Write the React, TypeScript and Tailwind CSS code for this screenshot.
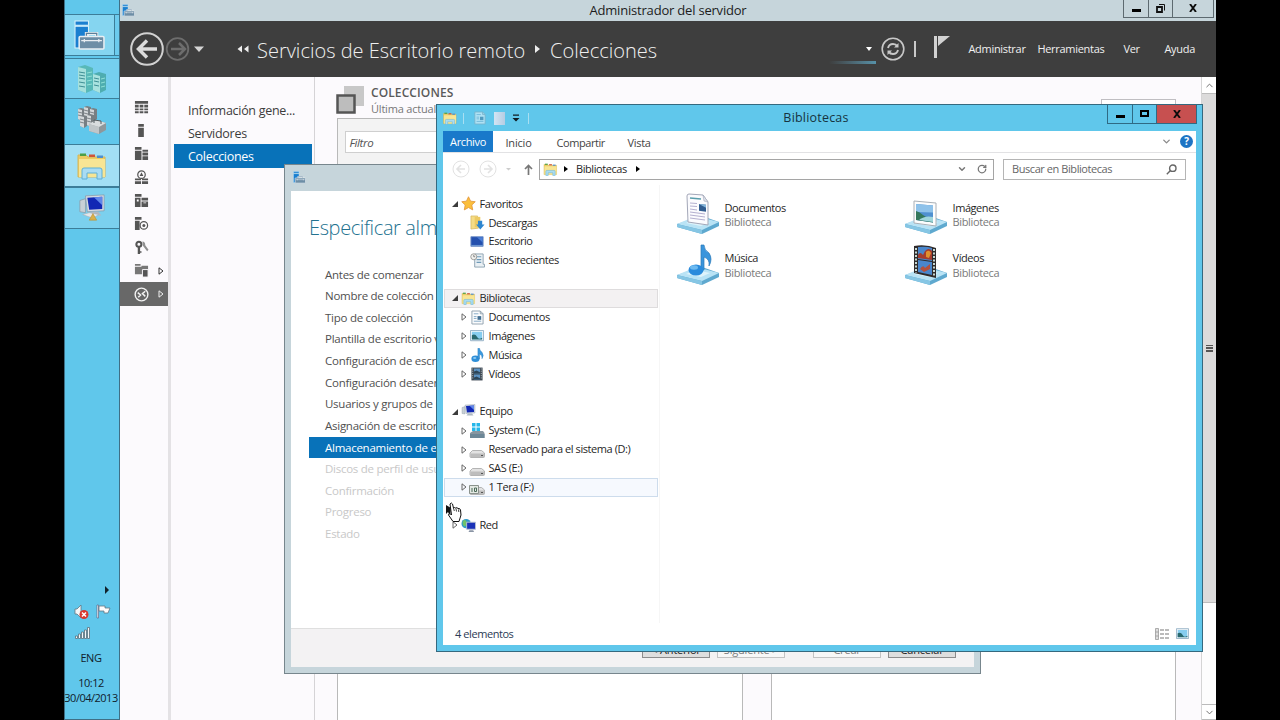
import type { ReactNode } from 'react';
import clsx from 'clsx';
import { ChevronDown, ChevronUp, RotateCw } from 'lucide-react';

/* ---------- Icons ---------- */

function ServerIcon({ className }: { className?: string }) {
  return (
    <svg viewBox="0 0 30 30" className={className}>
      <path d="M1 1h13v4H1z" fill="#1a7fd0" stroke="#d9f1fb" />
      <path d="M1 6h13v21H1z" fill="#1a7fd0" stroke="#d9f1fb" />
      <path d="M12 17v-4h10v4" fill="none" stroke="#e9eef2" strokeWidth="3" />
      <path d="M12 17v-4h10v4" fill="none" stroke="#5d7f98" strokeWidth="1.2" />
      <rect x="5" y="16" width="24" height="12" rx="1" fill="#6d8ea6" stroke="#e9eef2" strokeWidth="1.5" />
      <path d="M7 20h20M10 18.500v3M24 18.500v3" stroke="#e9eef2" strokeWidth="1.2" />
    </svg>
  );
}

function FolderIcon({ className }: { className?: string }) {
  return (
    <svg viewBox="0 0 30 28" className={className}>
      <path d="M1 3h8l2 2h17v20H1z" fill="#eccb62" stroke="#d3b65c" />
      <path d="M3 1.500h6v2.500H3z" fill="#4c9f45" />
      <path d="M12 2.500h6v2.500h-6z" fill="#d0553a" />
      <path d="M20 3.500h6v2.500h-6z" fill="#4d8fd0" />
      <path d="M2 7h26v18H2z" fill="#f8e594" />
      <path d="M5 27v-9q0-2 2-2h16q2 0 2 2v9h-5v-6H10v6z" fill="#a9dcf3" stroke="#5fb0d6" />
    </svg>
  );
}

function TowersIcon() {
  return (
    <svg viewBox="0 0 30 30" className="h-[30px] w-[30px]">
      <path d="M1 3l7-2 8 3v22l-7 3-8-3z" fill="#58b9b8" />
      <path d="M1 3l8 2v24l-8-3z" fill="#a5e0dc" />
      <path d="M16 10l6-2 7 2v16l-6 3-7-3z" fill="#4eadb0" />
      <path d="M16 10l7 2v17l-7-3z" fill="#a9e2df" />
      <path d="M2 8l6 1M2 11l6 1M2 14l6 1M2 18l6 1M2 22l6 1M17 14l5 1M17 17l5 1M17 21l5 1" stroke="#3f8f95" />
      <path d="M10 9l5-1M10 13l5-1M10 17l5-1M10 21l5-1M24 15l4-1M24 19l4-1M24 23l4-1" stroke="#8fe0d6" />
    </svg>
  );
}

function ClusterIcon() {
  const towers = [
    [1, 3], [7, 1], [13, 3], [3, 10], [10, 9],
  ];
  return (
    <svg viewBox="0 0 30 30" className="h-[30px] w-[30px]">
      {towers.map(([x, y]) => (
        <g key={`${x}-${y}`} transform={`translate(${x} ${y})`}>
          <path d="M0 1l3-1 4 1v10l-3 2-4-2z" fill="#787f83" />
          <path d="M0 1l4 1v11l-4-2z" fill="#d3d7d9" />
          <path d="M0 4l4 1M0 7l4 1" stroke="#686f73" strokeWidth=".8" />
        </g>
      ))}
      <path d="M12 19l7-4 10 3v7l-7 4-10-3z" fill="#8f979b" />
      <path d="M12 19l10 3v7l-10-3z" fill="#c0c6c9" />
      <path d="M12 19l7-4 10 3-7 4z" fill="#d9dddf" />
      <path d="M17 18v-3l7 1v3" fill="none" stroke="#555d61" />
    </svg>
  );
}

function MonitorIcon({ className, cone = false }: { className?: string; cone?: boolean }) {
  return (
    <svg viewBox="0 0 30 30" className={className}>
      <path d="M2 7l6-2v15l-6-1z" fill="#c8d0d6" stroke="#8693a0" strokeWidth=".7" />
      <path d="M8 2l20-1v17L10 19z" fill="#d5dbe2" stroke="#8390a0" strokeWidth=".7" />
      <path d="M10 4l16-1v13l-14 1z" fill="#1228b4" />
      <path d="M17 3.500l9-.5v9z" fill="#5f86ea" />
      <path d="M14 19h8l3 4H11z" fill="#aeb8c2" />
      {cone && (
        <>
          <path d="M5 22l7-2 10 2-6 4z" fill="#e3e7ea" stroke="#a4afb7" strokeWidth=".6" />
          <path d="M16 21l4 7h-8z" fill="#d8b04a" stroke="#b98a2a" strokeWidth=".6" />
        </>
      )}
    </svg>
  );
}

function Documento({ className }: { className?: string }) {
  return (
    <svg viewBox="0 0 14 16" className={className}>
      <path d="M1 1h9l3 3v11H1z" fill="#fbfcfd" stroke="#8fa0ad" />
      <path d="M10 1v3h3" fill="none" stroke="#8fa0ad" />
      <path d="M3 4h5M3 7h3M3 9h3M3 12h8" stroke="#7fa6c4" />
      <path d="M7 6.500h4v4H7z" fill="#416f93" />
    </svg>
  );
}

function Imagen({ className }: { className?: string }) {
  return (
    <svg viewBox="0 0 16 14" className={className}>
      <path d="M.5.500h15v12H.500z" fill="#fdfdfd" stroke="#84a5bd" />
      <path d="M2 2h12v9H2z" fill="#86cdef" />
      <path d="M2 6q4-2 6 2t6 1v2H2z" fill="#28696f" />
    </svg>
  );
}

function Musica({ className }: { className?: string }) {
  return (
    <svg viewBox="0 0 16 18" className={className}>
      <ellipse cx="5.500" cy="13" rx="5" ry="4" fill="#2f8fd8" />
      <path d="M8.500 0h2q0 3 3 5 3 4 0 8 1-4-3-6v6h-2z" fill="#3c9be0" stroke="#2576b8" strokeWidth=".5" />
      <ellipse cx="4.500" cy="12" rx="2" ry="1.300" fill="#8dcaf2" />
    </svg>
  );
}

function Video({ className }: { className?: string }) {
  return (
    <svg viewBox="0 0 14 16" className={className}>
      <path d="M.5.500h13v15H.500z" fill="#3d4852" />
      <path d="M3.500 1.500h7v6h-7zM3.500 8.500h7v6h-7z" fill="#5c93c4" />
      <path d="M3.500 5l3-1 4 2v1.500h-7zM3.500 12l3-1 4 2v1.500h-7z" fill="#2d4658" />
      <path d="M2 1.500v13M12 1.500v13" stroke="#b9c3ca" strokeDasharray="1.300 1.300" />
    </svg>
  );
}

function Disco({ variant = 'plain' }: { variant?: 'plain' | 'windows' | 'shared' }) {
  return (
    <svg viewBox="0 0 16 16" className="h-4 w-4">
      {variant === 'windows' ? (
        <>
          <path d="M1 10l3-2h10l1.500 2v5H1z" fill="#8796a0" />
          <path d="M1 11h14.500v4H1z" fill="#6c8797" />
          <path d="M3 0h3.500v3.500H3zM7.500 0H11v3.500H7.500zM3 4.500h3.500V8H3zM7.500 4.500H11V8H7.500z" fill="#25b7ea" />
        </>
      ) : (
        <>
          <path d="M1 11l2.500-2.500h9l3 2.500v3.500q0 1-1 1H2q-1 0-1-1z" fill="#e2e2e2" stroke="#a5a5a5" strokeWidth=".8" />
          <path d="M1.500 11.500h13.500v3.500H1.500z" fill="#bdbdbd" />
          <path d="M12 13.500h2" stroke="#555" />
        </>
      )}
      {variant === 'shared' && (
        <>
          <path d="M.5 6.500h9v8h-9z" fill="#e3e8e3" stroke="#8b938d" />
          <path d="M3 9v4M5.500 9h2v3.500h-2z" stroke="#4b6a58" fill="none" />
        </>
      )}
    </svg>
  );
}

/* glass stand that every large library icon sits on */
function LibraryStand({ children }: { children: ReactNode }) {
  return (
    <svg viewBox="0 0 44 42" className="h-[42px] w-11">
      <path d="M1 31l25-8 17 6v4l-17 8L1 34z" fill="#5fa9cf" />
      <path d="M1 31l19-8 23 6-17 8z" fill="#b9e3f5" />
      <path d="M1 31l25 6v4L1 34z" fill="#86c6e4" />
      <path d="M10 30l10-4 14 3-9 4z" fill="#def3fb" />
      {children}
    </svg>
  );
}

const bigIcons: Record<string, ReactNode> = {
  Documentos: (
    <LibraryStand>
      <path d="M11 3q0-2 2-2l14 1 5 7v23L12 29z" fill="#fbfbfe" stroke="#a3a7b8" />
      <path d="M27 2l1 6 4 1z" fill="#dfe3ec" stroke="#a3a7b8" strokeWidth=".6" />
      <path d="M14 5l11 1" stroke="#5a9eac" strokeWidth="1.600" />
      <path d="M14 10l7 .5M14 13l7 .5M14 16l7 1M14 19l15 2M14 22l15 2M14 25l15 2" stroke="#b4b0d0" />
      <path d="M23 11l7 .7v7l-7-.9z" fill="#315d90" />
      <path d="M23 11l7 .7v3z" fill="#85b7dc" />
    </LibraryStand>
  ),
  Imágenes: (
    <LibraryStand>
      <path d="M10 8l22 2v23l-22-3z" fill="#fdfdfd" stroke="#aab0b6" />
      <path d="M12 11l17 1.500v17L12 27z" fill="#4f90d0" />
      <path d="M12 11l17 1.500v7L12 19z" fill="#8ec2ea" />
      <path d="M12 18q4 1 7 4t10 2v5.500L12 27z" fill="#35785c" />
      <path d="M15 27q6-5 14-3v5z" fill="#9fd6dc" />
    </LibraryStand>
  ),
  Música: (
    <LibraryStand>
      <path d="M25 1h3q0 5 5 8 4 6 0 13 1-7-5-9v13h-3z" fill="#3a95dc" stroke="#2a78b8" strokeWidth=".7" />
      <ellipse cx="20" cy="26" rx="7.500" ry="5.500" fill="#2a8bdc" />
      <ellipse cx="18" cy="23.500" rx="4" ry="2.200" fill="#6dbaf0" />
    </LibraryStand>
  ),
  Vídeos: (
    <LibraryStand>
      <path d="M10 2q12-2 22 2v30l-22-5z" fill="#2f2b2b" />
      <path d="M14 3q8-1 14 1v13l-14-2zM14 16l14 2v13l-14-3z" fill="#4a86cc" />
      <path d="M14 11q2-4 5 0l2-4q4-4 7 0v9l-14-2z" fill="#a63c2e" />
      <path d="M22 8q3-3 5 1l-2 5-3-1z" fill="#e0902e" />
      <path d="M16 25q3-5 5-1l5-4v5l-6 3z" fill="#b5503c" />
      <path d="M12 4v25M30 5v27" stroke="#d9ece6" strokeWidth="1.800" strokeDasharray="2 1.500" />
    </LibraryStand>
  ),
};

function Estrella() {
  return (
    <svg viewBox="0 0 16 16" className="h-[15px] w-[15px]">
      <path d="M8 .8l2.200 4.700 5 .6-3.700 3.500 1 5.200L8 12.300l-4.500 2.500 1-5.200L.8 6.100l5-.6z" fill="#fbbf3c" stroke="#e2973a" strokeWidth=".9" />
    </svg>
  );
}

function Descargas() {
  return (
    <svg viewBox="0 0 16 16" className="h-[15px] w-[15px]">
      <path d="M1 1h7l1 13-8 1z" fill="#f5dc86" stroke="#d3b35a" strokeWidth=".7" />
      <path d="M5 2h6v11H5z" fill="#edca63" />
      <path d="M8.500 6h4.500v4h2.500L11 15.500 6.500 10h2z" fill="#2e86d0" />
    </svg>
  );
}

function Escritorio() {
  return (
    <svg viewBox="0 0 16 14" className="h-[13px] w-[14px]">
      <path d="M1 1.500h14v11H1z" fill="#2450ae" stroke="#7392c8" />
      <path d="M8 2h6.500v6z" fill="#4d80d6" />
      <path d="M1.500 11.500h13" stroke="#7aa3d8" />
    </svg>
  );
}

function Recientes() {
  return (
    <svg viewBox="0 0 16 16" className="h-[15px] w-[15px]">
      <path d="M5 1h9v11h1.500v3H5z" fill="#eaf0f4" stroke="#8da2b1" />
      <path d="M7 4h5M7 7h5M7 10h5" stroke="#6f9ab8" strokeWidth="1.200" />
      <circle cx="4" cy="4" r="3.200" fill="#f1f1ee" stroke="#9a9a96" />
      <path d="M4 2v2h1.500" fill="none" stroke="#666" strokeWidth=".8" />
    </svg>
  );
}

function Red() {
  return (
    <svg viewBox="0 0 16 16" className="h-[15px] w-[15px]">
      <circle cx="5.500" cy="6" r="5" fill="#2f9bc9" />
      <path d="M2 3q3-2 4 1T4 9Q1 8 2 3z" fill="#6fc36a" />
      <path d="M6 4.500h9.500v7.500H6z" fill="#1a32b8" stroke="#b8c1d4" />
      <path d="M9 13h4l1 2H8z" fill="#8a95a5" />
    </svg>
  );
}

/* ---------- Taskbar ---------- */

function Taskbar() {
  return (
    <aside className="flex w-14 shrink-0 flex-col border border-t-0 border-[#3f6f85] bg-[#60c7eb] text-[#10212c]">
      <div className="h-[14px]" />
      <div className="flex h-[42px] items-center border-y border-[#3c7d98] bg-[#6ccbed]">
        <div className="flex h-full w-[50px] items-center justify-center border-r border-[#3c7d98] bg-[#85d5f0]">
          <ServerIcon className="h-[31px] w-[31px]" />
        </div>
      </div>
      <div className="mt-0.5 flex h-[41px] items-center justify-center border-y border-[#3c7d98] bg-[#75cfee]">
        <TowersIcon />
      </div>
      <div className="flex h-[46px] items-center justify-center border-b border-[#3c7d98] pb-[3px]">
        <ClusterIcon />
      </div>
      <div className="flex h-[42px] items-center justify-center border-b border-[#3c7d98] bg-[#a2dff4]">
        <FolderIcon className="h-[28px] w-[30px]" />
      </div>
      <div className="flex h-[42px] items-center justify-center border-y border-[#3c7d98] bg-[#7bd0ee]">
        <MonitorIcon className="h-[30px] w-[28px]" cone />
      </div>

      {/* Tray */}
      <div className="mt-auto flex flex-col items-center pr-[2px] pb-[13px]">
        <div className="mb-[10px] ml-[32px] h-0 w-0 border-y-4 border-l-4 border-y-transparent border-l-[#11222c]" />
        <div className="flex w-full gap-[7px] pl-[9px]">
          <svg viewBox="0 0 15 16" className="h-4 w-[15px]">
            <path d="M1 5h2l4-4v13l-4-4H1z" fill="#f5f8fa" stroke="#667680" strokeWidth=".8" />
            <circle cx="10" cy="10.500" r="4.500" fill="#d8382f" />
            <path d="M8 8.500l4 4M12 8.500l-4 4" stroke="#fff" strokeWidth="1.500" />
          </svg>
          <svg viewBox="0 0 15 16" className="h-4 w-[15px]">
            <path d="M1 1h1.500v13H1z" fill="#f5f8fa" stroke="#557" strokeWidth=".6" />
            <path d="M3 2h6v2h5l-2 5H8V7H3z" fill="#fdfdfd" stroke="#667680" strokeWidth=".8" />
          </svg>
        </div>
        <svg viewBox="0 0 15 12" className="mt-[7px] mr-[18px] h-3 w-[15px]">
          <path d="M.5 9h2v2.500h-2zM3.500 7h2v4.500h-2zM6.500 5h2v6.500h-2zM9.500 3h2v8.500h-2zM12.500.5h2v11h-2z" fill="#f3f8fa" stroke="#5d6f79" strokeWidth=".8" />
        </svg>
        <span className="mt-[11px] text-[11px] leading-[15px] tracking-[-0.4px]">ENG</span>
        <span className="mt-[10px] text-[11px] leading-[15px] tracking-[-0.5px]">10:12</span>
        <span className="text-[11px] leading-[16px] tracking-[-0.500px]">30/04/2013</span>
      </div>
    </aside>
  );
}

/* ---------- Server manager ---------- */

const railIcons: ReactNode[] = [
  <path key="0" d="M1 1h14v3H1zM1 5h4v3H1zM6 5h4v3H6zM11 5h4v3h-4zM1 9h4v2H1zM6 9h4v2H6zM11 9h4v2h-4zM1 12h4v2H1zM6 12h4v2H6zM11 12h4v2h-4z" />,
  <path key="1" d="M4.500 1h6v3h-6zM4.500 5h6v10h-6z" />,
  <path key="2" d="M1 1h7v3H1zM1 5h7v10H1zM9 4h6v2H9zM9 7h6v3H9zM9 11h6v4H9z" />,
  <g key="3">
    <circle cx="8" cy="5" r="4" fill="none" stroke="#555" strokeWidth="1.300" />
    <path d="M8 2.500l2 4H6zM1 9h6.500v2H1zM8.500 9H15v2H8.500zM1 12h6.500v3H1zM8.500 12H15v3H8.500z" />
  </g>,
  <path key="4" d="M1 1h7v3H1zM1 5h6v10H1zM8 5h7v3H8zM8 9h7v6H8zM3 7h2v2H3zM10 10h3v1h-3z" fillRule="evenodd" />,
  <g key="5">
    <path d="M1 1h7v3H1zM1 5h5v10H1z" />
    <circle cx="10.500" cy="10" r="4" fill="#fcfafd" stroke="#555" strokeWidth="1.300" />
    <circle cx="10.500" cy="10" r="1.600" />
  </g>,
  <g key="6">
    <path d="M4 7.500h2.500V15H4zM6 12h2v1.500H6z" />
    <circle cx="5.200" cy="4.500" r="2.700" fill="none" stroke="#555" strokeWidth="2.200" />
    <path d="M9 1.500q3 0 3 4l3.500 5-1.500 1.500-4.500-6z" fill="#909090" />
  </g>,
  <g key="7">
    <path d="M1 1h6v2H1zM1 4h14v8H1zM8 3h7v1H8z" fill="#777" />
    <path d="M9 7h6v8H9z" stroke="#fcfafd" />
  </g>,
];

function SideRail() {
  return (
    <div className="flex w-12 shrink-0 flex-col pt-[18.500px]">
      {railIcons.map((icon, i) => (
        <div key={i} className="flex h-[23.350px] items-center pl-[14px]">
          <svg viewBox="0 0 16 16" className="h-[15px] w-[15px]" fill="#555">{icon}</svg>
          {i === 7 && <OutlineTriangle className="ml-[9px] text-[#333]" />}
        </div>
      ))}
      <div className="flex h-[24px] items-center bg-[#686868] pl-[14px]">
        <svg viewBox="0 0 16 16" className="h-[15px] w-[15px]" fill="none" stroke="#f2f2f2">
          <circle cx="8" cy="8" r="6.800" strokeWidth="1.500" />
          <path d="M4 6l3 2.500L4.500 11M12 4.500L9 7l3 3" strokeWidth="1.600" />
        </svg>
        <OutlineTriangle className="ml-[9px] text-[#eee]" />
      </div>
    </div>
  );
}

function OutlineTriangle({ className }: { className?: string }) {
  return (
    <svg viewBox="0 0 6 8" className={clsx('h-2 w-1.5 shrink-0', className)}>
      <path d="M1 .8L5 4 1 7.200z" fill="none" stroke="currentColor" />
    </svg>
  );
}

function ServerManager() {
  return (
    <div className="flex min-w-0 flex-1 flex-col bg-[#fcfafd]">
      <div className="flex h-[21px] shrink-0 bg-[#c6d5db]">
        <ServerIcon className="mt-[4px] ml-[2px] h-[13px] w-[13px]" />
        <div className="flex-1 pl-[78px] text-center text-[13px] leading-[21px] tracking-[-0.2px] text-[#1c1c1c]">
          Administrador del servidor
        </div>
        <div className="mr-[2px] flex h-[18px] border border-t-0 border-[#5d6a70]">
          <span className="flex w-[25px] justify-center border-r border-[#5d6a70] pt-[9px]">
            <span className="h-[3px] w-[9px] bg-black" />
          </span>
          <span className="flex w-6 justify-center border-r border-[#5d6a70] pt-1">
            <svg viewBox="0 0 9 9" className="h-[9px] w-[9px]" fill="none" stroke="#111">
              <path d="M1 3h5v5H1z" strokeWidth="1.800" />
              <path d="M3 .5h5.500v6" />
            </svg>
          </span>
          <span className="flex w-10 justify-center pt-1"><CloseX /></span>
        </div>
      </div>

      {/* Header */}
      <div className="flex h-[56px] shrink-0 items-center bg-[#3e3e3e] text-[#f0f0f0]">
        <svg viewBox="0 0 80 36" className="ml-[9px] h-9 w-20" fill="none">
          <circle cx="18" cy="18" r="15.800" stroke="#d2d2d2" strokeWidth="2" />
          <path d="M28 18H10M18 9.500L9.500 18l8.500 8.500" stroke="#dcdcdc" strokeWidth="3.500" />
          <circle cx="48.500" cy="18" r="10.800" stroke="#6d6d6d" strokeWidth="1.800" />
          <path d="M42 18h13M50 12l6 6-6 6" stroke="#6d6d6d" strokeWidth="2.500" />
          <path d="M65 15.500h10l-5 5.500z" fill="#d5d5d5" />
        </svg>
        <svg viewBox="0 0 12 8" className="mb-px ml-[28px] h-2 w-3" fill="#eee">
          <path d="M5 .5v7L.5 4zM11.500.5v7L7 4z" />
        </svg>
        <span className="mt-1 ml-[8px] w-[268px] text-[20px] font-light whitespace-nowrap">
          Servicios de Escritorio remoto
        </span>
        <span className="ml-[10px] h-0 w-0 border-y-4 border-l-5 border-y-transparent border-l-[#eee]" />
        <span className="mt-1 ml-[10px] text-[20px] font-light">Colecciones</span>

        <div className="ml-auto flex items-center pr-[21px] text-[11px] tracking-[-0.3px]">
          <div className="mt-[13px] flex h-[17px] w-[47px] flex-col items-end justify-between">
            <span className="mr-[4px] h-0 w-0 border-x-3 border-t-4 border-x-transparent border-t-white" />
            <span className="h-[3px] w-full bg-linear-to-r from-[#3e3e3e] to-[#5691a8]" />
          </div>
          <svg viewBox="0 0 24 24" className="ml-[5px] h-6 w-6" fill="none" stroke="#c8c8c8">
            <circle cx="12" cy="12" r="10.800" strokeWidth="1.600" />
            <path d="M7 11q1-4 5-4 3 0 4 2M17 13q-1 4-5 4-3 0-4-2" strokeWidth="1.900" />
            <path d="M17.500 6v4.500H13zM6.500 18v-4.500H11z" fill="#c8c8c8" stroke="none" />
          </svg>
          <span className="ml-[9px] h-4 w-[2px] bg-[#c9c9c9]" />
          <svg viewBox="0 0 16 22" className="mb-1 ml-[18px] h-[22px] w-4">
            <path d="M0 0h3v22H0zM4 0h12L4 10z" fill="#d2d2d2" />
          </svg>
          <span className="ml-[18px] w-[69px]">Administrar</span>
          <span className="w-[86px]">Herramientas</span>
          <span className="w-[41px]">Ver</span>
          <span>Ayuda</span>
        </div>
      </div>

      <div className="flex min-h-0 flex-1">
        <SideRail />
        <nav className="flex w-[147px] shrink-0 flex-col border-x-[3px] border-r border-l-[#e4e2e5] border-r-[#d5d3d6] pt-[21px] text-[12.500px] tracking-[-0.28px] text-[#3c3c3c]">
          <span className="h-[23px] pl-[17px] leading-[25px]">Información gene...</span>
          <span className="h-[23px] pl-[17px] leading-[25px]">Servidores</span>
          <span className="ml-[3px] h-[24px] w-[138px] bg-[#0872b9] pl-[14px] leading-[26px] text-white">Colecciones</span>
        </nav>

        <main className="flex min-w-0 flex-1 flex-col pt-[8px] pl-[22px]">
          <div className="flex h-[33px]">
            <svg viewBox="0 0 29 29" className="-ml-px h-[29px] w-[29px]">
              <path d="M8 1h20v20H8z" fill="#c8c8c8" />
              <path d="M1.500 10.500h17v17h-17z" fill="#bdbdbd" stroke="#555" strokeWidth="2.500" />
            </svg>
            <div className="ml-[6px] flex-1">
              <div className="text-[12px] leading-4 font-semibold tracking-[0.100px] text-[#5a5a5a]">COLECCIONES</div>
              <div className="text-[11px] leading-4 tracking-[-0.2px] whitespace-nowrap text-[#777]">
                Última actualización
              </div>
            </div>
            <div className="mt-[14px] mr-[25px] h-4 w-[75px] border border-[#c0bec2] bg-white" />
          </div>
          <div className="mr-[25px] flex flex-1 gap-[28px]">
            <div className="flex w-[406px] flex-col border-x border-t border-[#b9b9b9] bg-white">
              <div className="h-[60px] bg-[#f3f3f3] px-[7px] pt-[12px]">
                <div className="h-[22px] border border-[#cfcfcf] bg-white pl-[3.500px] text-[11.500px] leading-[22px] tracking-[-0.4px] text-[#555] italic">
                  Filtro
                </div>
              </div>
            </div>
            <div className="flex-1 border-x border-t border-[#b9b9b9] bg-white" />
          </div>
        </main>

        {/* Scrollbar */}
        <div className="flex w-[15px] shrink-0 flex-col border-l border-[#d5d5d5] bg-[#fdfdfd]">
          <div className="flex h-4 items-center justify-center bg-white text-[#666]">
            <ChevronUp size={11} />
          </div>
          <div className="flex h-[510px] items-center justify-center border-y border-[#bcbcbc] bg-[#dcdbdb]">
            <span className="flex h-[7px] w-[7px] flex-col justify-between">
              <span className="h-[1.500px] bg-[#555]" />
              <span className="h-[1.500px] bg-[#555]" />
              <span className="h-[1.500px] bg-[#555]" />
            </span>
          </div>
          <div className="mt-auto flex h-4 items-center justify-center border-y border-[#bbb] bg-white text-[#666]">
            <ChevronDown size={11} />
          </div>
        </div>
      </div>
    </div>
  );
}

function CloseX() {
  return (
    <svg viewBox="0 0 8 8" className="h-2 w-2">
      <path d="M1 0l6 8M7 0L1 8" stroke="#0c0c0c" strokeWidth="1.900" />
    </svg>
  );
}

/* ---------- Collection wizard ---------- */

const steps = [
  'Antes de comenzar',
  'Nombre de colección',
  'Tipo de colección',
  'Plantilla de escritorio virtual',
  'Configuración de escritorio',
  'Configuración desatendida',
  'Usuarios y grupos de usuarios',
  'Asignación de escritorios',
  'Almacenamiento de escritorios',
  'Discos de perfil de usuario',
  'Confirmación',
  'Progreso',
  'Estado',
];
const activeStep = 8;

function Wizard() {
  return (
    <div className="absolute top-[164px] left-[284px] flex h-[510px] w-[697px] flex-col border border-[#77868d] bg-[#c6d5db] px-[6px] pb-[6px]">
      <div className="h-[26px] shrink-0 pt-[6px] pl-[2px]">
        <ServerIcon className="h-[13px] w-[13px]" />
      </div>
      <div className="flex flex-1 flex-col bg-white">
        <h1 className="mt-[22px] ml-[18px] text-[20px] leading-[30px] font-light tracking-[-0.38px] whitespace-nowrap text-[#23728f]">
          Especificar almacenamiento
        </h1>
        <ul className="mt-[20.500px] ml-[18px] w-[200px] text-[11.500px] leading-[21.620px] tracking-[-0.26px] whitespace-nowrap text-[#505050]">
          {steps.map((step, i) => (
            <li
              key={step}
              className={clsx(
                'pl-4',
                i === activeStep && 'bg-[#0872b9] text-white',
                i > activeStep && 'text-[#c8c8c8]',
              )}
            >
              {step}
            </li>
          ))}
        </ul>
        <div className="mt-auto flex h-[39px] items-start justify-end border-t border-[#dfdfdf] bg-[#f3f2f3] pt-[6px] pr-[18px] text-[11px] leading-[27px] tracking-[-0.2px] text-[#1c1c1c]">
          <span className="h-[23px] w-[68px] border border-[#8c8c8c] bg-[#dedede] text-center">&lt; Anterior</span>
          <span className="ml-[7px] h-[23px] w-[68px] border border-[#c3c3c3] bg-[#f7f7f7] text-center text-[#7d7d7d]">Siguiente &gt;</span>
          <span className="ml-[28px] h-[23px] w-[68px] border border-[#c3c3c3] bg-[#f7f7f7] text-center text-[#7d7d7d]">Crear</span>
          <span className="ml-[7px] h-[23px] w-[68px] border border-[#8c8c8c] bg-[#dedede] text-center">Cancelar</span>
        </div>
      </div>
    </div>
  );
}

/* ---------- Explorer ---------- */

interface TreeRow {
  label?: string;
  icon?: ReactNode;
  level?: 0 | 1;
  arrow?: 'open' | 'closed';
  state?: 'selected' | 'hover';
}

const tree: TreeRow[] = [
  { label: 'Favoritos', icon: <Estrella />, level: 0, arrow: 'open' },
  { label: 'Descargas', icon: <Descargas />, level: 1 },
  { label: 'Escritorio', icon: <Escritorio />, level: 1 },
  { label: 'Sitios recientes', icon: <Recientes />, level: 1 },
  {},
  { label: 'Bibliotecas', icon: <FolderIcon className="h-[13px] w-[15px]" />, level: 0, arrow: 'open', state: 'selected' },
  { label: 'Documentos', icon: <Documento className="h-[15px] w-[13px]" />, level: 1, arrow: 'closed' },
  { label: 'Imágenes', icon: <Imagen className="h-3 w-[14px]" />, level: 1, arrow: 'closed' },
  { label: 'Música', icon: <Musica className="h-[15px] w-[13px]" />, level: 1, arrow: 'closed' },
  { label: 'Vídeos', icon: <Video className="h-[14px] w-3" />, level: 1, arrow: 'closed' },
  {},
  { label: 'Equipo', icon: <MonitorIcon className="h-[15px] w-[15px]" />, level: 0, arrow: 'open' },
  { label: 'System (C:)', icon: <Disco variant="windows" />, level: 1, arrow: 'closed' },
  { label: 'Reservado para el sistema (D:)', icon: <Disco />, level: 1, arrow: 'closed' },
  { label: 'SAS (E:)', icon: <Disco />, level: 1, arrow: 'closed' },
  { label: '1 Tera (F:)', icon: <Disco variant="shared" />, level: 1, arrow: 'closed', state: 'hover' },
  {},
  { label: 'Red', icon: <Red />, level: 0, arrow: 'closed' },
];

function Row({ label, icon, level, arrow, state }: TreeRow) {
  return (
    <div
      className={clsx(
        'flex h-[18.900px] items-center border',
        level === 1 ? 'pl-[15px]' : 'pl-[6px]',
        !state && 'border-transparent',
        state === 'selected' && 'border-[#dedcdd] bg-[#f3f1f2]',
        state === 'hover' && 'border-[#cddcec] bg-[#f6f9fe]',
      )}
    >
      <span className="flex w-2 shrink-0 justify-center">
        {arrow === 'closed' && <OutlineTriangle className="text-[#666]" />}
        {arrow === 'open' && (
          <svg viewBox="0 0 6 6" className="h-1.5 w-1.5"><path d="M6 0v6H0z" fill="#3c3c3c" /></svg>
        )}
      </span>
      {icon && <span className="ml-[1px] flex w-4 shrink-0 justify-center">{icon}</span>}
      <span className="ml-[3.500px] whitespace-nowrap">{label}</span>
    </div>
  );
}

function Explorer() {
  return (
    <div className="absolute top-[104px] left-[436px] flex h-[548px] w-[767px] flex-col border border-[#35697f] bg-[#60c7eb] px-[6px] pb-[6px]">
      {/* Title bar */}
      <div className="flex h-[26px] shrink-0">
        <div className="flex h-[26px] w-[100px] items-center">
          <FolderIcon className="h-[13px] w-[14px]" />
          <span className="ml-[6px] h-[11px] w-px bg-[#a8dff2]" />
          <Documento className="ml-[10px] h-[14px] w-3 opacity-50" />
          <span className="ml-2 h-[13px] w-[11px] bg-linear-to-r from-[#d2e4f3] to-[#b6cde3]" />
          <svg viewBox="0 0 8 8" className="ml-[7px] h-2 w-2"><path d="M1 .5h6v1.200H1zM.5 4h7L4 7.500z" fill="#101c22" /></svg>
          <span className="ml-2 h-[11px] w-px bg-[#a8dff2]" />
        </div>
        <div className="flex-1 pr-[18px] text-center text-[12.500px] leading-[26px] tracking-[0.200px] text-[#163340]">Bibliotecas</div>
        <div className="-mr-px flex h-[19px] border border-t-0 border-[#2f6a84]">
          <span className="flex w-[25px] justify-center border-r border-[#2f6a84] pt-[10px]">
            <span className="h-[3px] w-[9px] bg-black" />
          </span>
          <span className="flex w-6 justify-center border-r border-[#2f6a84] pt-[5px]">
            <span className="h-[7px] w-[9px] border-2 border-black" />
          </span>
          <span className="flex w-[39px] justify-center bg-[#c75050] pt-[5px]"><CloseX /></span>
        </div>
      </div>

      <div className="flex min-h-0 flex-1 flex-col bg-white text-[11px] tracking-[-0.43px] text-[#1f1f1f]">
        {/* Ribbon tabs */}
        <div className="flex h-[22px] shrink-0 items-center border-b border-[#e2e2e4] leading-[22px] text-[#444]">
          <span className="h-[21px] w-[50px] bg-[#1979ca] text-center tracking-[-0.35px] text-white">Archivo</span>
          <span className="mt-[2px] ml-[12.500px] w-[51px] tracking-[-0.2px]">Inicio</span>
          <span className="mt-[2px] w-[71px]">Compartir</span>
          <span className="mt-[2px] tracking-[-0.3px]">Vista</span>
          <ChevronDown size={11} strokeWidth={3} className="mr-[8px] ml-auto text-[#8a8a8a]" />
          <span className="mr-[3px] h-[13px] w-[13px] rounded-full bg-[#1d74c4] text-center text-[10px] leading-[13px] font-bold text-white">?</span>
        </div>

        {/* Address bar */}
        <div className="flex h-[32px] shrink-0 items-center pr-[10px] pl-[9px]">
          <svg viewBox="0 0 62 18" className="h-[18px] w-[62px]" fill="none" stroke="#e2e2e2">
            <circle cx="9" cy="9" r="8" />
            <path d="M13 9H5M9 5L5 9l4 4" strokeWidth="1.600" />
            <circle cx="36" cy="9" r="8" />
            <path d="M32 9h8M36 5l4 4-4 4" strokeWidth="1.600" />
            <path d="M54 8h5l-2.500 2.500z" fill="#ccc" stroke="none" />
          </svg>
          <svg viewBox="0 0 9 11" className="ml-[10px] h-[11px] w-[9px]" fill="none" stroke="#777" strokeWidth="1.700">
            <path d="M4.500 11V1.500M1 5l3.500-3.500L8 5" />
          </svg>
          <div className="ml-[6px] flex h-[21px] w-[455px] items-center border border-[#a5a5a5] pl-[3px]">
            <FolderIcon className="h-[13px] w-[15px]" />
            <span className="ml-[6px] h-0 w-0 border-y-[3.500px] border-l-4 border-y-transparent border-l-black" />
            <span className="ml-[8px] w-[52px]">Bibliotecas</span>
            <span className="ml-[8px] h-0 w-0 border-y-[3.500px] border-l-4 border-y-transparent border-l-black" />
            <ChevronDown size={10} strokeWidth={3.5} className="mr-[10px] ml-auto text-[#777]" />
            <RotateCw size={10} strokeWidth={3} className="mr-[6px] text-[#777]" />
          </div>
          <div className="ml-[9px] flex h-[21px] flex-1 items-center justify-between border border-[#b5b5b5] pr-[8px] pl-2 text-[#666]">
            <span>Buscar en Bibliotecas</span>
            <svg viewBox="0 0 11 11" className="h-[11px] w-[11px]" fill="none" stroke="#666" strokeWidth="1.400">
              <circle cx="6.800" cy="4.200" r="3.200" />
              <path d="M4.500 6.500L.8 10.200" />
            </svg>
          </div>
        </div>

        <div className="flex min-h-0 flex-1">
          <div className="w-[217px] shrink-0 border-r border-[#f6f6f6] pt-[9.500px] pr-px pl-px">
            {tree.map((row, i) => (
              <Row key={i} {...row} />
            ))}
          </div>
          <div className="grid h-[109px] grid-cols-[228px_228px] grid-rows-[50.500px_50.500px] pt-[8px] pl-[16px]">
            {['Documentos', 'Imágenes', 'Música', 'Vídeos'].map((name) => (
              <div key={name} className="flex">
                {bigIcons[name]}
                <div className="mt-[7.500px] ml-[4.500px] leading-[14.500px]">
                  <div>{name}</div>
                  <div className="tracking-[-0.350px] text-[#7a7a7a]">Biblioteca</div>
                </div>
              </div>
            ))}
          </div>
        </div>

        {/* Status bar */}
        <div className="flex h-[22px] shrink-0 items-center justify-between pr-[7px] pl-3 text-[#2c3b56]">
          <span>4 elementos</span>
          <span className="flex items-center gap-[7px]">
            <svg viewBox="0 0 14 12" className="h-3 w-[14px]">
              <path d="M.5.500h3v11h-3zM.5 4h3M.5 8h3" fill="#ddd" stroke="#9a9a9a" strokeWidth=".8" />
              <path d="M5 2h9M5 6h9M5 10h9" stroke="#777" strokeDasharray="4 1" />
            </svg>
            <Imagen className="h-3 w-[13px]" />
          </span>
        </div>
      </div>
    </div>
  );
}

function HandCursor() {
  return (
    <svg viewBox="0 0 18 21" className="absolute top-[502px] left-[445px] h-[21px] w-[18px]">
      <path d="M1 3v9l2-2 2 4 1-8z" fill="#111" />
      <path
        d="M5 2q1.500-2 2.500 0l1 4q1-1 2 0 1.500-1 2.500.5 2-.5 2.500 1.500l.5 5-2 6.500H8L3.500 13q0-2 2-1l1 1z"
        fill="#fff"
        stroke="#111"
      />
      <path d="M8.500 6l.8 3M11 6.500l.5 3M13.500 7.500l.3 2.500" stroke="#111" strokeWidth=".8" />
    </svg>
  );
}

export default function App() {
  return (
    <div className="relative flex h-[720px] w-[1280px] overflow-hidden bg-black pr-16 pl-16 font-['Open_Sans','Noto_Sans',sans-serif]">
      <Taskbar />
      <ServerManager />
      <Wizard />
      <Explorer />
      <HandCursor />
    </div>
  );
}
